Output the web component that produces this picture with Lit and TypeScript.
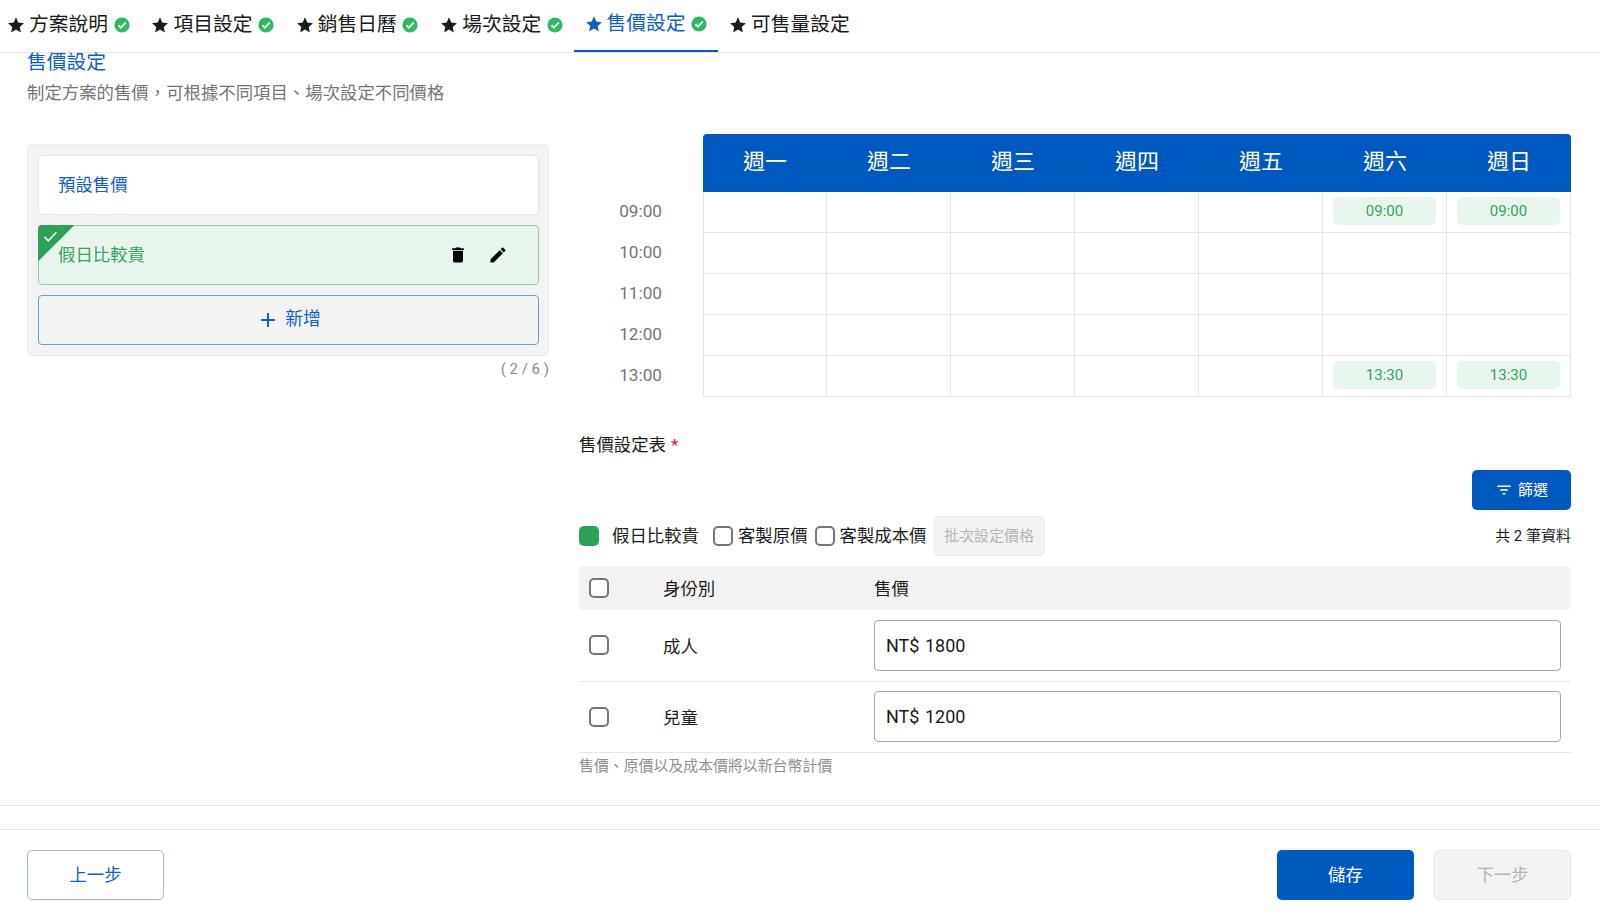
import { LitElement, html, css } from "lit";
import { customElement } from "lit/decorators.js";

const star = html`<svg class="star" viewBox="0 0 24 24"><path d="M12 1.8l3.1 6.9 7.4.8-5.5 5 1.5 7.4-6.5-3.8-6.5 3.8 1.5-7.4-5.5-5 7.4-.8z" fill="currentColor"/></svg>`;
const ok = html`<svg class="ok" viewBox="0 0 16 16"><circle cx="8" cy="8" r="7.6" fill="#2dba5f"/><path d="M4.4 8.3l2.5 2.4 4.8-5" fill="none" stroke="#fff" stroke-width="1.9"/></svg>`;

const tabs = [
  { t: "方案說明", ok: true },
  { t: "項目設定", ok: true },
  { t: "銷售日曆", ok: true },
  { t: "場次設定", ok: true },
  { t: "售價設定", ok: true, active: true },
  { t: "可售量設定", ok: false },
];
const days = ["週一", "週二", "週三", "週四", "週五", "週六", "週日"];
const rows = [
  { t: "09:00", slot: "09:00" },
  { t: "10:00" },
  { t: "11:00" },
  { t: "12:00" },
  { t: "13:00", slot: "13:30" },
];
const people = [
  { n: "成人", p: "NT$ 1800" },
  { n: "兒童", p: "NT$ 1200" },
];

@customElement("app-root")
export class AppRoot extends LitElement {
  static styles = css`
    :host { display: block; width: 1600px; height: 920px; overflow: hidden; background: #fff; color: #1a1a1a;
      font-family: Roboto, "Noto Sans CJK TC", sans-serif; font-size: 16px; }
    * { box-sizing: border-box; }
    .page { display: flex; flex-direction: column; height: 920px; }
    .tabs { display: flex; height: 53px; border-bottom: 1px solid #e6e6e6; margin-left: -4px; flex: none; }
    .tab { display: flex; align-items: center; width: 144.4px; height: 53px; padding: 0 12px 3px 11px; gap: 4px; font-size: 19.75px; color: #1a1a1a; line-height: 1; white-space: nowrap; }
    .tab.last { width: auto; }
    .tab.active { color: #0f5fc4; border-bottom: 2px solid #0059bf; height: 52px; padding-bottom: 2px; }
    .star { width: 18px; height: 18px; flex: none; }
    .ok { width: 16px; height: 16px; flex: none; margin-left: 1.5px; }
    .title { font-size: 19.75px; line-height: 24px; color: #0f5fc4; padding: 0 27px; margin-top: -2px; }
    .sub { font-size: 17.4px; line-height: 24px; color: #757575; padding: 0 27px; margin-top: 6px; }
    .body { display: grid; grid-template-columns: 522px 992px; column-gap: 30px; padding: 29px 29px 0 27px; flex: none; }
    .left { padding-top: 9.5px; }
    .panel { background: #f3f3f3; border: 1px solid #ececec; border-radius: 4px; padding: 10px 9px 10px 10px; display: flex; flex-direction: column; gap: 10px; }
    .item { position: relative; height: 60px; border: 1px solid #e6e6e6; border-radius: 4px; background: #fff; color: #0f5fc4; display: flex; align-items: center; padding: 0 20px 3px 19px; font-size: 17.4px; }
    .item.sel { background: #e9f6ee; border-color: #8bcfa3; color: #34a35f; justify-content: space-between; padding-right: 30px; }
    .corner { position: absolute; left: -1px; top: -1px; width: 37px; height: 37px; background: #2da158; clip-path: polygon(0 0, 100% 0, 0 100%); border-top-left-radius: 4px; }
    .corner svg { position: absolute; left: 5px; top: 4px; width: 15px; height: 15px; }
    .acts { display: flex; gap: 20px; align-items: center; padding-top: 3px; }
    .acts svg { width: 20px; height: 20px; display: block; }
    .add { height: 50px; border: 1px solid #6f9be0; border-radius: 4px; display: flex; align-items: center; justify-content: center; gap: 8px; color: #0f5fc4; font-size: 17.8px; background: #f3f3f3; padding: 0 0 5px 3px; }
    .add svg { width: 18px; height: 18px; margin-top: 5px; }
    .count { text-align: right; color: #8a8a8a; font-size: 15px; line-height: 20px; margin-top: 3px; }
    .head { display: grid; grid-template-columns: 124px repeat(7, 124px); }
    .head .d { height: 58px; background: #0059bf; color: #fff; font-size: 22px; display: flex; align-items: center; justify-content: center; padding-bottom: 9px; }
    .head .d.first { border-top-left-radius: 4px; }
    .head .d.lastd { border-top-right-radius: 4px; }
    .row { display: grid; grid-template-columns: 124px repeat(7, 124px); height: 41px; }
    .time { color: #757575; font-size: 17.2px; display: flex; align-items: center; justify-content: flex-end; padding: 0 41px 4px 0; }
    .cell { border-right: 1px solid #e6e6e6; border-bottom: 1px solid #e6e6e6; padding: 5px 10px 0; }
    .cell.c0 { border-left: 1px solid #e6e6e6; }
    .chip { height: 28px; border-radius: 5px; background: #e9f6ee; color: #34a35f; font-size: 15px; display: flex; align-items: center; justify-content: center; }
    .label { margin-top: 36px; font-size: 17.4px; line-height: 24px; color: #1a1a1a; }
    .label b { color: #d8233c; font-weight: 400; margin-left: 5px; font-size: 17px; }
    .fbar { display: flex; justify-content: flex-end; margin-top: 13px; }
    .filter { width: 99px; height: 40px; background: #0059bf; border-radius: 5px; color: #fff; font-size: 15px; display: flex; align-items: center; justify-content: center; gap: 5px; padding-bottom: 3px; }
    .filter svg { width: 18px; height: 18px; margin-top: 3px; }
    .opts { display: flex; align-items: center; height: 40px; margin-top: 6px; font-size: 17.4px; color: #1a1a1a; }
    .box { width: 20px; height: 20px; border: 2px solid #767676; border-radius: 5px; background: #fff; flex: none; display: block; }
    .gbox { width: 20px; height: 20px; border-radius: 5px; background: #2da158; flex: none; margin-right: 13px; }
    .lift { margin-bottom: 4px; }
    .opt { display: flex; align-items: center; gap: 5px; margin-left: 14px; }
    .opt.n { margin-left: 7px; }
    .bulk { margin-left: 7px; width: 111px; height: 40px; background: #f3f3f3; border: 1px solid #e8e8e8; border-radius: 5px; color: #b5b5b5; font-size: 15px; display: flex; align-items: center; justify-content: center; padding-bottom: 3px; }
    .total { margin-left: auto; font-size: 15px; margin-bottom: 3px; }
    .thead, .tr { display: grid; grid-template-columns: 74px 211px 1fr; align-items: center; }
    .thead { height: 44px; background: #f3f3f3; border-radius: 4px; margin-top: 10px; padding-left: 10px; font-size: 17.4px; }
    .thead span + span { margin-bottom: 2px; }
    .tr { height: 71.5px; border-bottom: 1px solid #e6e6e6; padding: 0 10px; font-size: 17.4px; }
    .input { height: 51px; border: 1px solid #a8a8a8; border-radius: 4px; padding: 0 11px; display: flex; align-items: center; font-size: 18px; color: #1a1a1a; word-spacing: 1px; }
    .note { font-size: 14.9px; color: #8f8f8f; line-height: 24px; margin-top: 1px; }
    .rule { flex: none; height: 1px; background: #ededed; }
    .rule.a { margin-top: 27px; }
    .rule.b { margin-top: 23px; }
    .foot { display: flex; align-items: center; padding: 20px 29px 0 27px; gap: 20px; }
    .btn { width: 137px; height: 50px; border-radius: 5px; display: flex; align-items: center; justify-content: center; font-size: 17.4px; padding-bottom: 4px; }
    .prev { border: 1px solid #9db9e6; color: #0f5fc4; margin-right: auto; background: #fff; }
    .save { background: #0059bf; color: #fff; }
    .next { background: #f3f3f3; border: 1px solid #e8e8e8; color: #b5b5b5; }
  `;

  render() {
    return html`<div class="page">
      <nav class="tabs">
        ${tabs.map((t, i) => html`<div class="tab ${t.active ? "active" : ""} ${i === tabs.length - 1 ? "last" : ""}">${star}<span>${t.t}</span>${t.ok ? ok : ""}</div>`)}
      </nav>
      <div class="title">售價設定</div>
      <div class="sub">制定方案的售價，可根據不同項目、場次設定不同價格</div>
      <div class="body">
        <div class="left">
          <div class="panel">
            <div class="item">預設售價</div>
            <div class="item sel">
              <span class="corner"><svg viewBox="0 0 14 14"><path d="M1.5 7.5l3.5 3.5 7.5-8" fill="none" stroke="#fff" stroke-width="1.5"/></svg></span>
              <span>假日比較貴</span>
              <span class="acts">
                <svg viewBox="0 0 24 24"><path d="M6 19c0 1.1.9 2 2 2h8c1.1 0 2-.9 2-2V7H6v12zM19 4h-3.5l-1-1h-5l-1 1H5v2h14V4z" fill="#000"/></svg>
                <svg viewBox="0 0 24 24"><path d="M3 17.25V21h3.75L17.81 9.94l-3.75-3.75L3 17.25zM20.71 7.04a1 1 0 0 0 0-1.41l-2.34-2.34a1 1 0 0 0-1.41 0l-1.83 1.83 3.75 3.75 1.83-1.83z" fill="#000"/></svg>
              </span>
            </div>
            <div class="add"><svg viewBox="0 0 18 18"><path d="M9 2v14M2 9h14" stroke="#0f5fc4" stroke-width="2" fill="none"/></svg><span>新增</span></div>
          </div>
          <div class="count">( 2 / 6 )</div>
        </div>
        <div>
          <div class="head"><div></div>${days.map((d, i) => html`<div class="d ${i === 0 ? "first" : ""} ${i === 6 ? "lastd" : ""}">${d}</div>`)}</div>
          ${rows.map((r) => html`<div class="row"><div class="time">${r.t}</div>${days.map((_, i) => html`<div class="cell c${i}">${r.slot && i >= 5 ? html`<div class="chip">${r.slot}</div>` : ""}</div>`)}</div>`)}
          <div class="label">售價設定表<b>*</b></div>
          <div class="fbar"><div class="filter"><svg viewBox="0 0 24 24"><path d="M3 6h18v2H3zM7 11h10v2H7zM10 16h4v2h-4z" fill="#fff"/></svg><span>篩選</span></div></div>
          <div class="opts">
            <span class="gbox"></span><span class="lift">假日比較貴</span>
            <span class="opt"><span class="box"></span><span class="lift">客製原價</span></span>
            <span class="opt n"><span class="box"></span><span class="lift">客製成本價</span></span>
            <span class="bulk">批次設定價格</span>
            <span class="total">共 2 筆資料</span>
          </div>
          <div class="thead"><span class="box"></span><span>身份別</span><span>售價</span></div>
          ${people.map((p) => html`<div class="tr"><span class="box"></span><span>${p.n}</span><div class="input">${p.p}</div></div>`)}
          <div class="note">售價、原價以及成本價將以新台幣計價</div>
        </div>
      </div>
      <div class="rule a"></div>
      <div class="rule b"></div>
      <div class="foot">
        <div class="btn prev">上一步</div>
        <div class="btn save">儲存</div>
        <div class="btn next">下一步</div>
      </div>
    </div>`;
  }
}
